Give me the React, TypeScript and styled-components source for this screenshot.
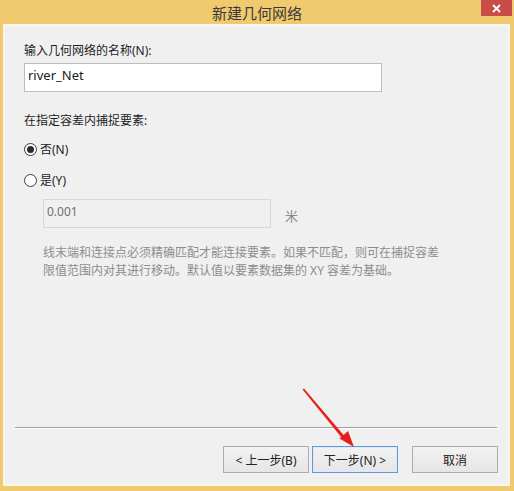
import React from "react";
import styled, { createGlobalStyle } from "styled-components";

const GlobalStyle = createGlobalStyle`
  html, body {
    margin: 0;
    padding: 0;
  }
  body {
    width: 514px;
    height: 491px;
    overflow: hidden;
    background: #f1c96e;
    font-family: "Noto Sans", "Noto Sans CJK SC", sans-serif;
  }
  * { box-sizing: border-box; }
`;

const Window = styled.div`
  position: relative;
  width: 514px;
  height: 491px;
  display: flex;
  flex-direction: column;
  background: #f1c96e;
`;

const TitleBar = styled.div`
  height: 24px;
  display: grid;
  grid-template-columns: 1fr auto 1fr;
  align-items: center;
`;

const Title = styled.div`
  grid-column: 2;
  font-family: "Noto Sans CJK SC", sans-serif;
  font-size: 15px;
  line-height: 20px;
  color: #3a3a3a;
  padding-top: 1px;
`;

const CloseButton = styled.div`
  grid-column: 3;
  justify-self: end;
  align-self: start;
  margin-right: 2px;
  width: 31px;
  height: 16px;
  background: #c94c48;
  display: flex;
  align-items: center;
  justify-content: center;
`;

const Frame = styled.div`
  flex: 1;
  display: flex;
  padding: 0 4px 5px 3px;
`;

const Client = styled.div`
  flex: 1;
  display: flex;
  flex-direction: column;
  background: #f0f0f0;
  border: 2px solid #f9f5ef;
`;

const Body = styled.div`
  display: flex;
  flex-direction: column;
  padding: 17px 0 0 19px;
`;

const Label = styled.div<{ $gap?: number }>`
  font-family: "Noto Sans", "Noto Sans CJK SC", sans-serif;
  font-size: 12px;
  line-height: 16px;
  color: #1e1e1e;
  margin-top: ${(p) => p.$gap ?? 0}px;
`;

const TextField = styled.input<{ $width: number; $size: number }>`
  display: block;
  width: ${(p) => p.$width}px;
  height: 29px;
  margin: 0;
  padding: 3px 3px 8px;
  font-family: "Noto Sans", "Noto Sans CJK SC", sans-serif;
  font-size: ${(p) => p.$size}px;
  line-height: 16px;
  border: 1px solid #bdbdbd;
  background: #ffffff;
  color: #1a1a1a;
  outline: none;

  &:disabled {
    background: #f0f0f0;
    border-color: #d7d7d7;
    color: #6f6f6f;
  }
`;

const NameField = styled(TextField)`
  margin-top: 4px;
`;

const RadioRow = styled.label<{ $gap: number }>`
  display: flex;
  align-items: center;
  gap: 3px;
  margin-top: ${(p) => p.$gap}px;
  height: 16px;
  font-family: "Noto Sans", "Noto Sans CJK SC", sans-serif;
  font-size: 12px;
  color: #1e1e1e;
`;

const RadioCircle = styled.span<{ $checked?: boolean }>`
  width: 13px;
  height: 13px;
  border-radius: 50%;
  border: 1px solid #3c3c3c;
  background: #ffffff;
  display: flex;
  align-items: center;
  justify-content: center;

  &::after {
    content: "";
    width: 7px;
    height: 7px;
    border-radius: 50%;
    background: ${(p) => (p.$checked ? "#2b2b2b" : "transparent")};
  }
`;

const Indented = styled.div`
  display: flex;
  flex-direction: column;
  padding-left: 19px;
`;

const ToleranceRow = styled.div`
  display: flex;
  align-items: center;
  gap: 14px;
  margin-top: 11px;
`;

const Unit = styled.span`
  font-family: "Noto Sans CJK SC", sans-serif;
  font-size: 13px;
  line-height: 16px;
  color: #8a8a8a;
  margin-top: 5px;
`;

const Hint = styled.p`
  margin: 16px 0 0;
  font-family: "Noto Sans", "Noto Sans CJK SC", sans-serif;
  font-size: 12px;
  line-height: 18px;
  color: #8d8d8d;
`;

const Footer = styled.div`
  margin-top: auto;
  display: flex;
  flex-direction: column;
`;

const Separator = styled.div`
  height: 2px;
  margin: 0 11px 0 10px;
  border-top: 1px solid #a0a0a0;
  border-bottom: 1px solid #ffffff;
`;

const ButtonRow = styled.div`
  display: flex;
  justify-content: flex-end;
  padding: 17px 10px 11px 0;
`;

const Button = styled.button<{ $primary?: boolean; $gapBefore?: number }>`
  width: 86px;
  height: 27px;
  margin: 0 0 0 ${(p) => p.$gapBefore ?? 0}px;
  padding: 0;
  font-family: "Noto Sans", "Noto Sans CJK SC", sans-serif;
  font-size: 12px;
  color: #222222;
  background: linear-gradient(#f2f2f2, #e6e6e6);
  border: 1px solid ${(p) => (p.$primary ? "#5c9bd8" : "#acacac")};
  box-shadow: ${(p) => (p.$primary ? "inset 0 0 0 1px #dfeaf6" : "none")};
  display: flex;
  align-items: center;
  justify-content: center;
`;

const Pointer = styled.svg`
  position: absolute;
  left: 0;
  top: 0;
  pointer-events: none;
`;

export default function App() {
  return (
    <>
      <GlobalStyle />
      <Window>
        <TitleBar>
          <Title>新建几何网络</Title>
          <CloseButton>
            <svg width="9" height="9" viewBox="0 0 9 9">
              <path d="M1 1 L8 8 M8 1 L1 8" stroke="#ffffff" strokeWidth="1.8" />
            </svg>
          </CloseButton>
        </TitleBar>
        <Frame>
          <Client>
            <Body>
              <Label>输入几何网络的名称(N):</Label>
              <NameField $width={358} $size={13} defaultValue="river_Net" readOnly />
              <Label $gap={21}>在指定容差内捕捉要素:</Label>
              <RadioRow $gap={12}>
                <RadioCircle $checked />
                否(N)
              </RadioRow>
              <RadioRow $gap={15}>
                <RadioCircle />
                是(Y)
              </RadioRow>
              <Indented>
                <ToleranceRow>
                  <TextField $width={228} $size={12} defaultValue="0.001" disabled />
                  <Unit>米</Unit>
                </ToleranceRow>
                <Hint>
                  线末端和连接点必须精确匹配才能连接要素。如果不匹配，则可在捕捉容差
                  <br />
                  限值范围内对其进行移动。默认值以要素数据集的 XY 容差为基础。
                </Hint>
              </Indented>
            </Body>
            <Footer>
              <Separator />
              <ButtonRow>
                <Button>&lt; 上一步(B)</Button>
                <Button $primary $gapBefore={3}>下一步(N) &gt;</Button>
                <Button $gapBefore={14}>取消</Button>
              </ButtonRow>
            </Footer>
          </Client>
        </Frame>
        <Pointer width="514" height="491" viewBox="0 0 514 491">
          <path d="M302.5 389.5 L304 388.5 L346.5 438.5 L344 440.5 Z" fill="#e5201b" />
          <polygon points="354,447 339.5,438.5 348,431" fill="#e5201b" />
        </Pointer>
      </Window>
    </>
  );
}
